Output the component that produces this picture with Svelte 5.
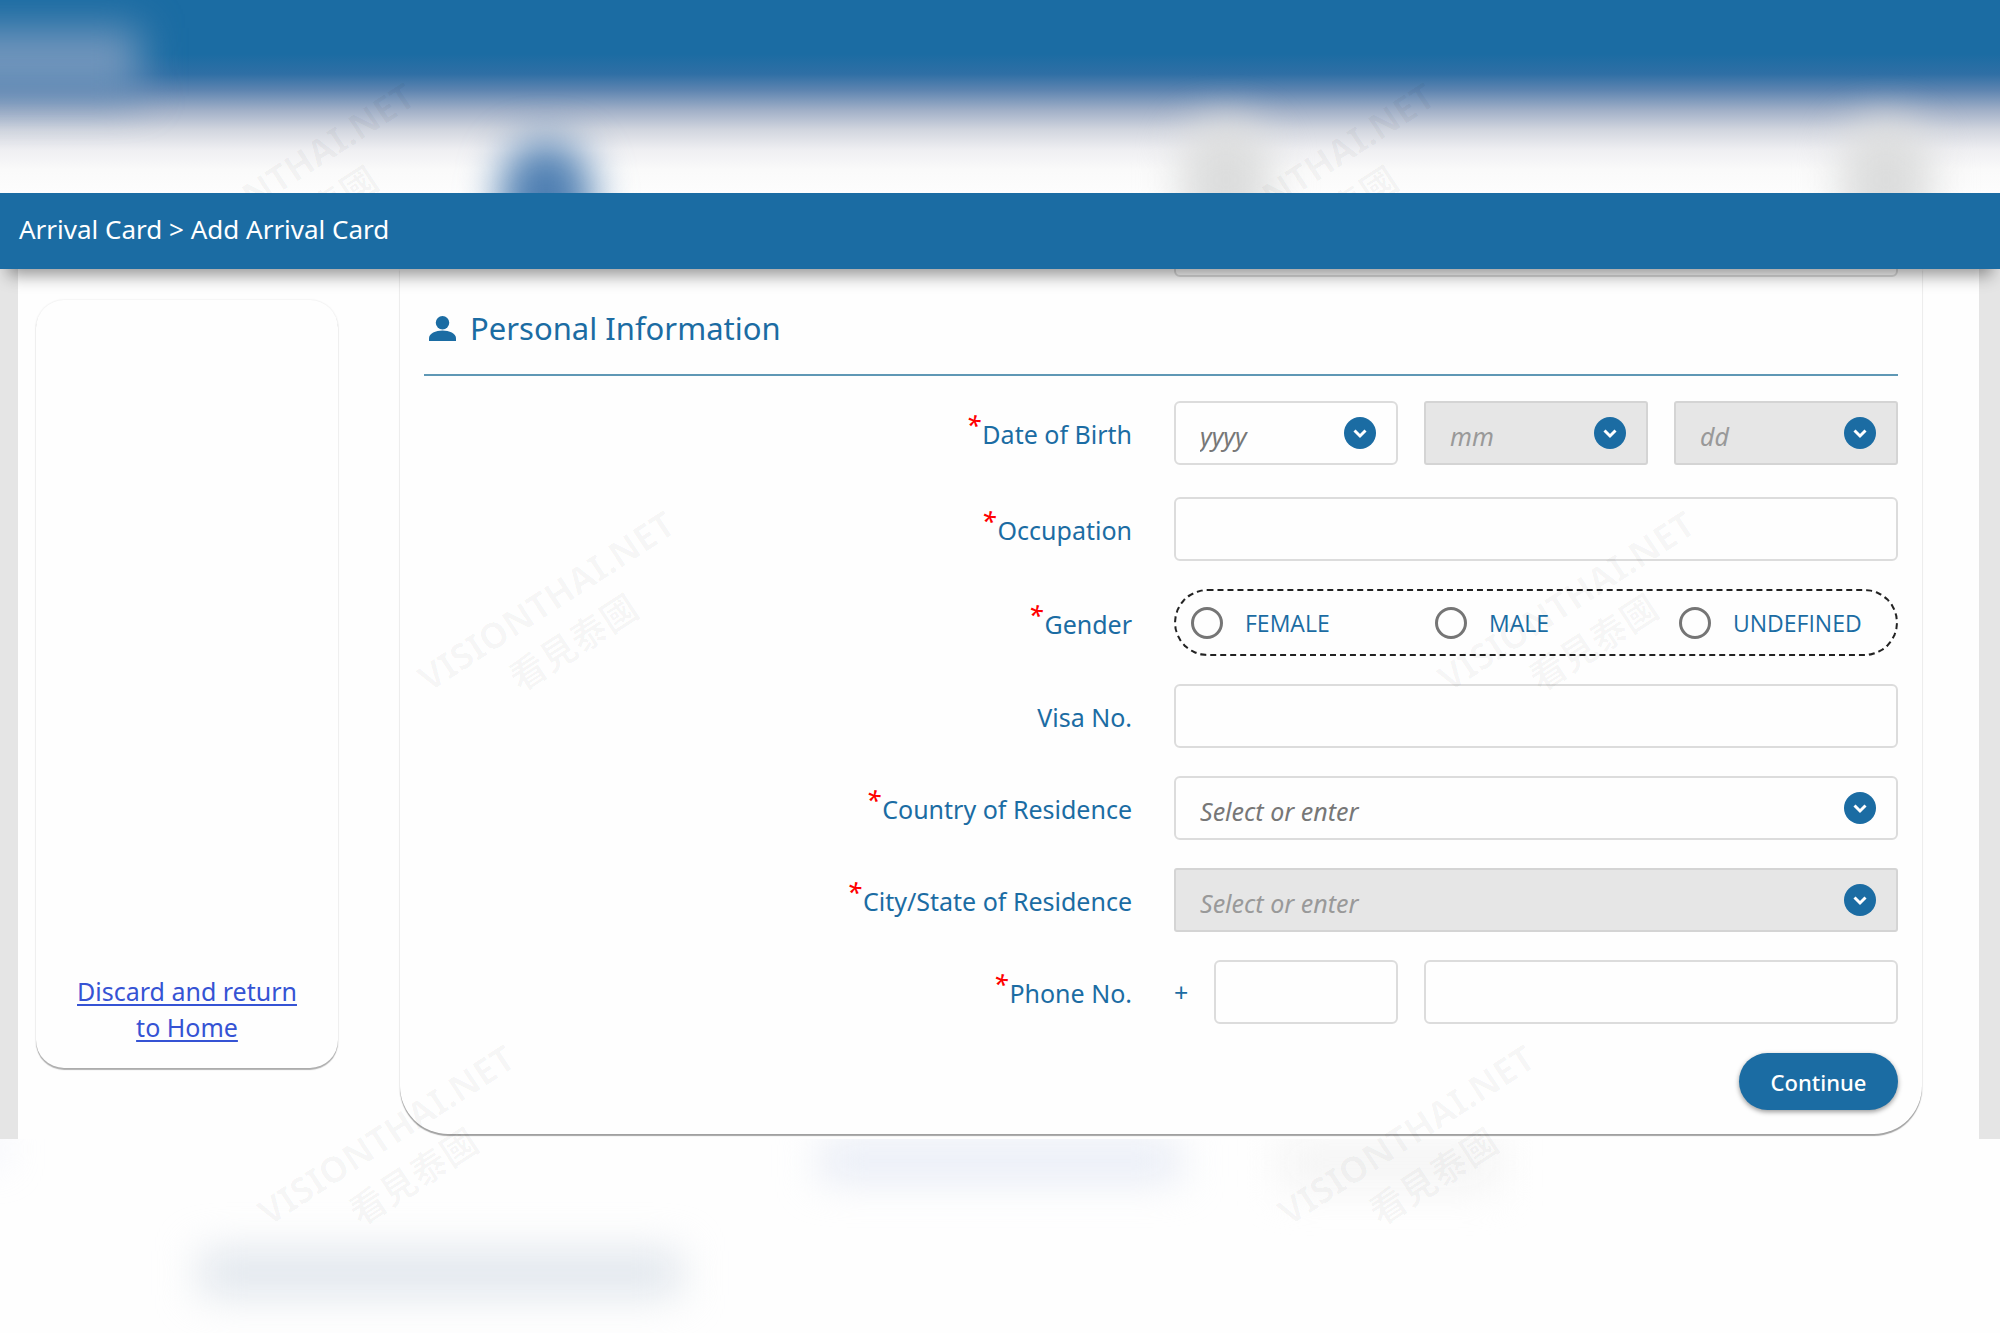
<script lang="ts">
  const dateParts = [
    { id: 'birth-year', hint: 'yyyy', label: 'Year of birth', disabled: false },
    { id: 'birth-month', hint: 'mm', label: 'Month of birth', disabled: true },
    { id: 'birth-day', hint: 'dd', label: 'Day of birth', disabled: true },
  ];

  const genders = ['FEMALE', 'MALE', 'UNDEFINED'];

  const watermarks = [
    { left: 7, top: 144 },
    { left: 58, top: 144 },
    { left: 20, top: 572 },
    { left: 71, top: 572 },
    { left: 12, top: 1106 },
    { left: 63, top: 1106 },
  ];

  let gender = $state('');
  let occupation = $state('');
  let visaNo = $state('');
  let country = $state('');
  let city = $state('');
  let dialCode = $state('');
  let phone = $state('');
</script>

{#snippet chevron()}
  <svg class="chevron" viewBox="0 0 32 32" aria-hidden="true">
    <circle cx="16" cy="16" r="16" />
    <path d="M10.5 13.5 16 19l5.5-5.5" />
  </svg>
{/snippet}

{#snippet star()}<span class="star" aria-hidden="true">*</span>{/snippet}

<div class="page">
  <div class="backdrop-top" aria-hidden="true">
    <span class="blob logo"></span>
    <span class="blob step current"></span>
    <span class="blob step second"></span>
    <span class="blob step third"></span>
  </div>

  <header class="crumbs">Arrival Card &gt; Add Arrival Card</header>

  <main class="sheet">
    <aside class="side-card">
      <a href="#home">Discard and return to Home</a>
    </aside>

    <form class="form-card" onsubmit={(e) => e.preventDefault()}>
      <div class="previous">
        <input class="box" type="text" aria-label="Passport No." />
      </div>

      <h2>
        <svg viewBox="0 0 28 28" aria-hidden="true">
          <circle cx="14" cy="8" r="7" />
          <path d="M0 27v-3c0-5 7-8 14-8s14 3 14 8v3z" />
        </svg>
        Personal Information
      </h2>

      <div class="row first">
        <label for="birth-year">{@render star()}Date of Birth</label>
        <div class="fields">
          {#each dateParts as part}
            <div class="picker">
              <select class="box" id={part.id} aria-label={part.label} disabled={part.disabled}>
                <option value="">{part.hint}</option>
              </select>
              {@render chevron()}
            </div>
          {/each}
        </div>
      </div>

      <div class="row">
        <label for="occupation">{@render star()}Occupation</label>
        <input class="box" id="occupation" type="text" bind:value={occupation} />
      </div>

      <div class="row">
        <span class="label" id="gender-label">{@render star()}Gender</span>
        <div class="radios" role="radiogroup" aria-labelledby="gender-label">
          {#each genders as option}
            <label class="radio">
              <input type="radio" name="gender" value={option} bind:group={gender} />
              {option}
            </label>
          {/each}
        </div>
      </div>

      <div class="row">
        <label for="visa">Visa No.</label>
        <input class="box" id="visa" type="text" bind:value={visaNo} />
      </div>

      <div class="row">
        <label for="country">{@render star()}Country of Residence</label>
        <div class="picker">
          <input class="box" id="country" type="text" placeholder="Select or enter" bind:value={country} />
          {@render chevron()}
        </div>
      </div>

      <div class="row">
        <label for="city">{@render star()}City/State of Residence</label>
        <div class="picker">
          <input
            class="box"
            id="city"
            type="text"
            placeholder="Select or enter"
            disabled={!country}
            bind:value={city}
          />
          {@render chevron()}
        </div>
      </div>

      <div class="row">
        <label for="phone">{@render star()}Phone No.</label>
        <div class="fields">
          <div class="dial">
            <span>+</span>
            <input class="box" type="tel" aria-label="Country code" bind:value={dialCode} />
          </div>
          <input class="box wide" id="phone" type="tel" bind:value={phone} />
        </div>
      </div>

      <div class="actions">
        <button type="submit">Continue</button>
      </div>
    </form>
  </main>

  <div class="backdrop-bottom" aria-hidden="true">
    <span class="blob text-one"></span>
    <span class="blob text-two"></span>
    <span class="blob text-three"></span>
    <span class="blob edge"></span>
  </div>

  {#each watermarks as mark}
    <div class="watermark" style="left: {mark.left}%; top: {mark.top}px" aria-hidden="true">
      VISIONTHAI.NET<br />看見泰國
    </div>
  {/each}
</div>

<style>
  :global(body) {
    margin: 0;
    background: #fefefe;
  }

  .page {
    --blue: #1b6ca3;
    position: relative;
    overflow: hidden;
    font-family: 'Noto Sans', 'Open Sans', 'Noto Sans CJK TC', sans-serif;
    font-size: 25px;
    line-height: 36px;
    color: var(--blue);
  }

  /* blurred strips above and below the sheet */
  .backdrop-top {
    position: relative;
    height: 193px;
    overflow: hidden;
    background: linear-gradient(
      #1b6ca3 54px,
      #2f6fa5 74px,
      #5d84b0 90px,
      #a0afc7 110px,
      #d2d6df 130px,
      #efeff2 150px,
      #fafafa 170px,
      #fdfdfd
    );
  }

  .backdrop-bottom {
    position: relative;
    height: 194px;
    overflow: hidden;
  }

  .blob {
    position: absolute;
    filter: blur(20px);
  }

  .logo {
    left: -4%;
    top: 28px;
    width: 11%;
    height: 68px;
    background: #7396bc;
  }

  .step {
    top: 140px;
    width: 92px;
    height: 120px;
    border-radius: 46px;
  }

  .current {
    left: 25%;
    background: #4f7fb2;
  }

  .second {
    left: 59%;
    top: 120px;
    background: #dcdddd;
  }

  .third {
    left: 92%;
    top: 120px;
    background: #dcdddd;
  }

  .text-one {
    left: 41%;
    top: 4px;
    width: 18%;
    height: 36px;
    background: #e5eaf5;
  }

  .text-two {
    left: 64%;
    top: 0;
    width: 11%;
    height: 48px;
    background: #f4f4f4;
  }

  .text-three {
    left: 10%;
    top: 112px;
    width: 24%;
    height: 44px;
    background: #dfe5ec;
  }

  .edge {
    left: -1%;
    top: 0;
    width: 1%;
    height: 20px;
    background: #dfe2f8;
  }

  .crumbs {
    position: relative;
    z-index: 1;
    padding: 18px 19px 22px;
    background: var(--blue);
    box-shadow: 0 14px 16px -8px rgba(0, 0, 0, 0.42);
    color: #fff;
    font-size: 26px;
  }

  .sheet {
    display: flex;
    align-items: flex-start;
    gap: 62px;
    padding: 0 57px 5px 18px;
    background: #fefefe;
    border: solid #e5e5e5;
    border-width: 0 21px 0 18px;
  }

  .side-card {
    box-sizing: border-box;
    flex: 0 0 302px;
    display: flex;
    align-items: flex-end;
    min-height: 768px;
    margin-top: 31px;
    padding: 0 30px 23px;
    border-radius: 28px;
    box-shadow:
      0 2px 1px rgba(0, 0, 0, 0.3),
      0 0 2px rgba(0, 0, 0, 0.12);
    text-align: center;
  }

  .side-card a {
    color: #3553d4;
    text-decoration-thickness: 2px;
    text-underline-offset: 3px;
  }

  .form-card {
    flex: 1;
    min-width: 0;
    padding: 0 24px 24px;
    border-radius: 0 0 48px 48px;
    box-shadow:
      0 2px 1px rgba(0, 0, 0, 0.35),
      0 0 2px rgba(0, 0, 0, 0.12);
  }

  /* tail of the field scrolled under the header */
  .previous {
    display: flex;
    justify-content: flex-end;
    align-items: flex-end;
    height: 8px;
    overflow: hidden;
  }

  .previous .box {
    flex: 0 0 724px;
  }

  h2 {
    display: flex;
    align-items: center;
    gap: 14px;
    margin: 0;
    padding: 28px 5px 23px;
    border-bottom: 2px solid #5f98b5;
    font-size: 31px;
    font-weight: 400;
    line-height: 46px;
  }

  h2 svg {
    width: 27px;
    height: 27px;
    fill: var(--blue);
  }

  .row {
    display: grid;
    grid-template-columns: 1fr 724px;
    column-gap: 42px;
    align-items: center;
    margin-top: 28px;
  }

  .row.first {
    margin: 25px 0 32px;
  }

  .row > label,
  .label {
    padding-top: 2px;
    text-align: right;
  }

  .star {
    position: relative;
    top: -10px;
    margin-right: 2px;
    font-size: 26px;
    font-style: italic;
    font-weight: 500;
    line-height: 1;
    color: #f00;
  }

  .fields {
    display: flex;
    gap: 26px;
  }

  .picker {
    position: relative;
    flex: 1;
    min-width: 0;
  }

  .box {
    box-sizing: border-box;
    display: block;
    width: 100%;
    height: 64px;
    padding: 6px 24px 0;
    border: 2px solid #dcdcdc;
    border-radius: 6px;
    background: #fefefe;
    color: #777;
    font: italic 25px 'Noto Sans', 'Open Sans', sans-serif;
  }

  select.box {
    appearance: none;
  }

  .box::placeholder {
    color: #777;
    opacity: 1;
  }

  .box:disabled {
    border-color: #d4d4d4;
    border-radius: 3px;
    background: #e6e6e6;
    color: #999;
    opacity: 1;
  }

  .box:disabled::placeholder {
    color: #999;
  }

  .chevron {
    position: absolute;
    right: 22px;
    top: 16px;
    width: 32px;
    height: 32px;
    fill: var(--blue);
    pointer-events: none;
  }

  .chevron path {
    fill: none;
    stroke: #fff;
    stroke-width: 3;
  }

  .radios {
    box-sizing: border-box;
    display: flex;
    height: 67px;
    padding-left: 15px;
    border: 2px dashed #222;
    border-radius: 34px;
  }

  .radio {
    flex: 0 0 244px;
    display: flex;
    align-items: center;
    gap: 22px;
    font-family: 'Open Sans', 'Noto Sans', sans-serif;
    font-size: 23px;
  }

  .radio input {
    appearance: none;
    box-sizing: border-box;
    width: 32px;
    height: 32px;
    margin: 0;
    border: 3px solid #757575;
    border-radius: 50%;
  }

  .radio input:checked {
    background: radial-gradient(var(--blue) 50%, transparent 55%);
  }

  .dial {
    flex: 0 0 224px;
    display: flex;
    align-items: center;
    justify-content: space-between;
    font-size: 25px;
  }

  .dial .box {
    width: 184px;
  }

  .wide {
    flex: 1;
    min-width: 0;
  }

  .actions {
    display: flex;
    justify-content: flex-end;
    margin-top: 29px;
  }

  .actions button {
    min-width: 159px;
    height: 57px;
    padding: 0 28px;
    border: 0;
    border-radius: 29px;
    background: var(--blue);
    box-shadow: 0 2px 5px rgba(0, 0, 0, 0.4);
    color: #fff;
    font: 500 22px 'Noto Sans', 'Open Sans', sans-serif;
  }

  .watermark {
    position: absolute;
    width: 320px;
    color: rgba(0, 0, 0, 0.03);
    font-size: 36px;
    font-weight: 700;
    line-height: 50px;
    text-align: center;
    white-space: nowrap;
    transform: rotate(-33deg);
    pointer-events: none;
  }
</style>
